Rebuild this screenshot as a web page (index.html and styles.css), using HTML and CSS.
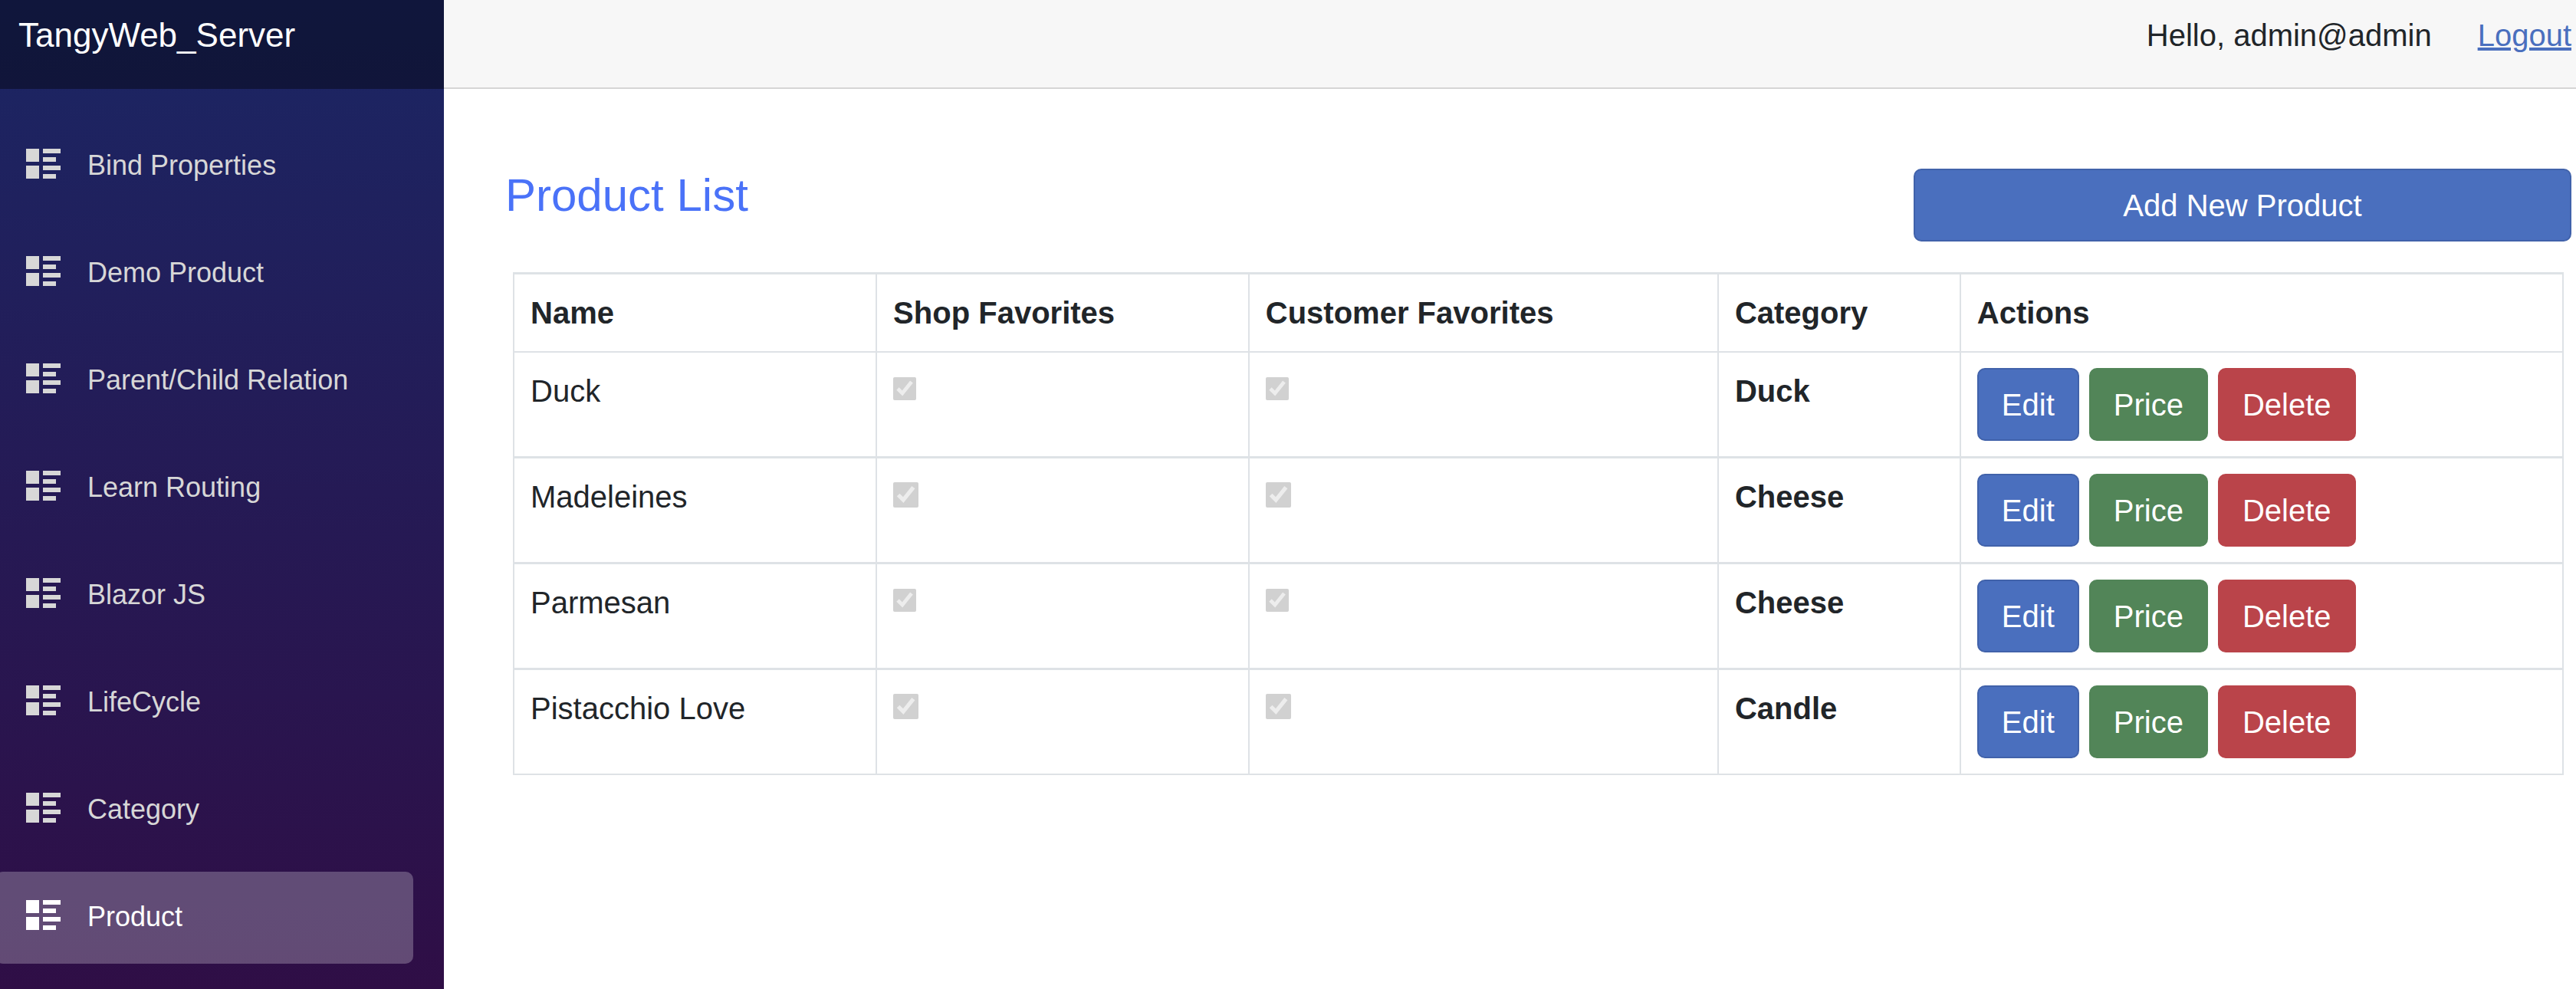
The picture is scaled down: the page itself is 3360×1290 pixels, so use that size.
FILE: index.html
```html
<!DOCTYPE html>
<html lang="en">
<head>
<meta charset="utf-8">
<title>Product List</title>
<link rel="stylesheet" href="styles.css">
</head>
<body>
<svg class="sprite" aria-hidden="true">
  <symbol id="list-rich" viewBox="0 0 45 39">
    <path d="M0 0h17v17H0zM22 0h23v6H22zM22 11h17v6H22zM0 22h17v17H0zM22 22h23v6H22zM22 33h17v6H22z"/>
  </symbol>
</svg>
<div class="page">
  <aside class="sidebar">
    <div class="brand-row"><a class="brand" href="#">TangyWeb_Server</a></div>
    <nav class="nav">
      <a class="nav-link" href="#"><svg class="icon"><use href="#list-rich"/></svg>Bind Properties</a>
      <a class="nav-link" href="#"><svg class="icon"><use href="#list-rich"/></svg>Demo Product</a>
      <a class="nav-link" href="#"><svg class="icon"><use href="#list-rich"/></svg>Parent/Child Relation</a>
      <a class="nav-link" href="#"><svg class="icon"><use href="#list-rich"/></svg>Learn Routing</a>
      <a class="nav-link" href="#"><svg class="icon"><use href="#list-rich"/></svg>Blazor JS</a>
      <a class="nav-link" href="#"><svg class="icon"><use href="#list-rich"/></svg>LifeCycle</a>
      <a class="nav-link" href="#"><svg class="icon"><use href="#list-rich"/></svg>Category</a>
      <a class="nav-link active" href="#" aria-current="page"><svg class="icon"><use href="#list-rich"/></svg>Product</a>
    </nav>
  </aside>
  <main class="main">
    <header class="top-row">
      <span>Hello, admin@admin</span>
      <a class="logout" href="#">Logout</a>
    </header>
    <article class="content">
      <div class="heading">
        <h1 class="title">Product List</h1>
        <button class="btn btn-primary btn-add" type="button">Add New Product</button>
      </div>
      <div class="table-wrap">
        <table class="table">
          <colgroup><col class="col-name"><col class="col-shop"><col class="col-customer"><col class="col-category"><col></colgroup>
          <thead>
            <tr><th scope="col">Name</th><th scope="col">Shop Favorites</th><th scope="col">Customer Favorites</th><th scope="col">Category</th><th scope="col">Actions</th></tr>
          </thead>
          <tbody>
            <tr>
              <td>Duck</td>
              <td><input type="checkbox" aria-label="Duck, shop favorite" checked disabled></td>
              <td><input type="checkbox" aria-label="Duck, customer favorite" checked disabled></td>
              <th>Duck</th>
              <td><div class="actions"><button class="btn btn-primary" type="button">Edit</button><button class="btn btn-success" type="button">Price</button><button class="btn btn-danger" type="button">Delete</button></div></td>
            </tr>
            <tr>
              <td>Madeleines</td>
              <td><input type="checkbox" aria-label="Madeleines, shop favorite" checked disabled></td>
              <td><input type="checkbox" aria-label="Madeleines, customer favorite" checked disabled></td>
              <th>Cheese</th>
              <td><div class="actions"><button class="btn btn-primary" type="button">Edit</button><button class="btn btn-success" type="button">Price</button><button class="btn btn-danger" type="button">Delete</button></div></td>
            </tr>
            <tr>
              <td>Parmesan</td>
              <td><input type="checkbox" aria-label="Parmesan, shop favorite" checked disabled></td>
              <td><input type="checkbox" aria-label="Parmesan, customer favorite" checked disabled></td>
              <th>Cheese</th>
              <td><div class="actions"><button class="btn btn-primary" type="button">Edit</button><button class="btn btn-success" type="button">Price</button><button class="btn btn-danger" type="button">Delete</button></div></td>
            </tr>
            <tr>
              <td>Pistacchio Love</td>
              <td><input type="checkbox" aria-label="Pistacchio Love, shop favorite" checked disabled></td>
              <td><input type="checkbox" aria-label="Pistacchio Love, customer favorite" checked disabled></td>
              <th>Candle</th>
              <td><div class="actions"><button class="btn btn-primary" type="button">Edit</button><button class="btn btn-success" type="button">Price</button><button class="btn btn-danger" type="button">Delete</button></div></td>
            </tr>
          </tbody>
        </table>
      </div>
    </article>
  </main>
</div>
</body>
</html>
```
FILE: styles.css
```css
* { box-sizing: border-box; }

body {
  margin: 0;
  background: #fff;
  color: #212529;
  font: 40px/60px "Liberation Sans", Arial, sans-serif;
}

.sprite { display: none; }

.page { display: flex; min-height: 100vh; }

/* Sidebar */
.sidebar {
  flex: none;
  width: 579px;
  overflow: hidden;
  background: linear-gradient(180deg, #1b2664 0%, #2f0e46 100%);
}
.brand-row {
  height: 116px;
  padding: 16px 24px;
  background: rgba(0, 0, 0, .4);
}
.brand {
  color: #fff;
  font-size: 44px;
  text-decoration: none;
}
.nav {
  display: flex;
  flex-direction: column;
  gap: 20px;
  margin-left: -6px;
  padding: 41px 40px 33px 0;
}
.nav-link {
  display: flex;
  align-items: center;
  height: 120px;
  padding: 0 0 2px 40px;
  border-radius: 10px;
  color: #d7d7d7;
  font-size: 36px;
  text-decoration: none;
}
.nav-link.active {
  background: rgba(255, 255, 255, .25);
  color: #fff;
}
.icon {
  width: 45px;
  height: 39px;
  margin: 0 35px 5px 0;
  fill: currentColor;
}

/* Main column */
.main { flex: 1; min-width: 0; }
.top-row {
  display: flex;
  justify-content: flex-end;
  gap: 60px;
  height: 116px;
  padding: 16px 6px 0 80px;
  background: #f7f7f7;
  border-bottom: 2px solid #d6d5d5;
}
.logout { color: #4a6fbe; }

.content { padding: 103px 6px 40px 80px; }
.heading {
  display: flex;
  justify-content: space-between;
  align-items: flex-start;
}
.title {
  margin: 0;
  color: #4a72f8;
  font-size: 60px;
  font-weight: 400;
  line-height: 72px;
}

.btn {
  height: 95px;
  padding: 0 30px;
  border: 2px solid transparent;
  border-radius: 10px;
  color: #fff;
  font: inherit;
}
.btn-primary { background: #4a6fbe; border-color: #4162aa; }
.btn-success { background: #528558; border-color: #528558; }
.btn-danger { background: #ba444a; border-color: #ba444a; }
.btn-add { width: 858px; margin-top: 1px; }

/* Product table */
.table-wrap { padding: 40px 10px 0; }
.table {
  width: 100%;
  table-layout: fixed;
  border-collapse: separate;
  border-spacing: 0;
  border: solid #dee2e6;
  border-width: 0 2px 2px 0;
}
.col-name { width: 17.7%; }
.col-shop { width: 18.17%; }
.col-customer { width: 22.9%; }
.col-category { width: 11.82%; }
.table th,
.table td {
  padding: 20px 20px 20px 21px;
  border: solid #dee2e6;
  border-width: 3px 0 0 2px;
  text-align: left;
  vertical-align: top;
}
.table tbody tr:first-child > * { border-top-width: 2px; }
.table input {
  width: 30px;
  height: 30px;
  margin: 0;
  vertical-align: 2px;
}
.table tr:nth-child(even) input {
  width: 33px;
  height: 33px;
  vertical-align: baseline;
}
.actions { display: flex; gap: 13px; }
```
